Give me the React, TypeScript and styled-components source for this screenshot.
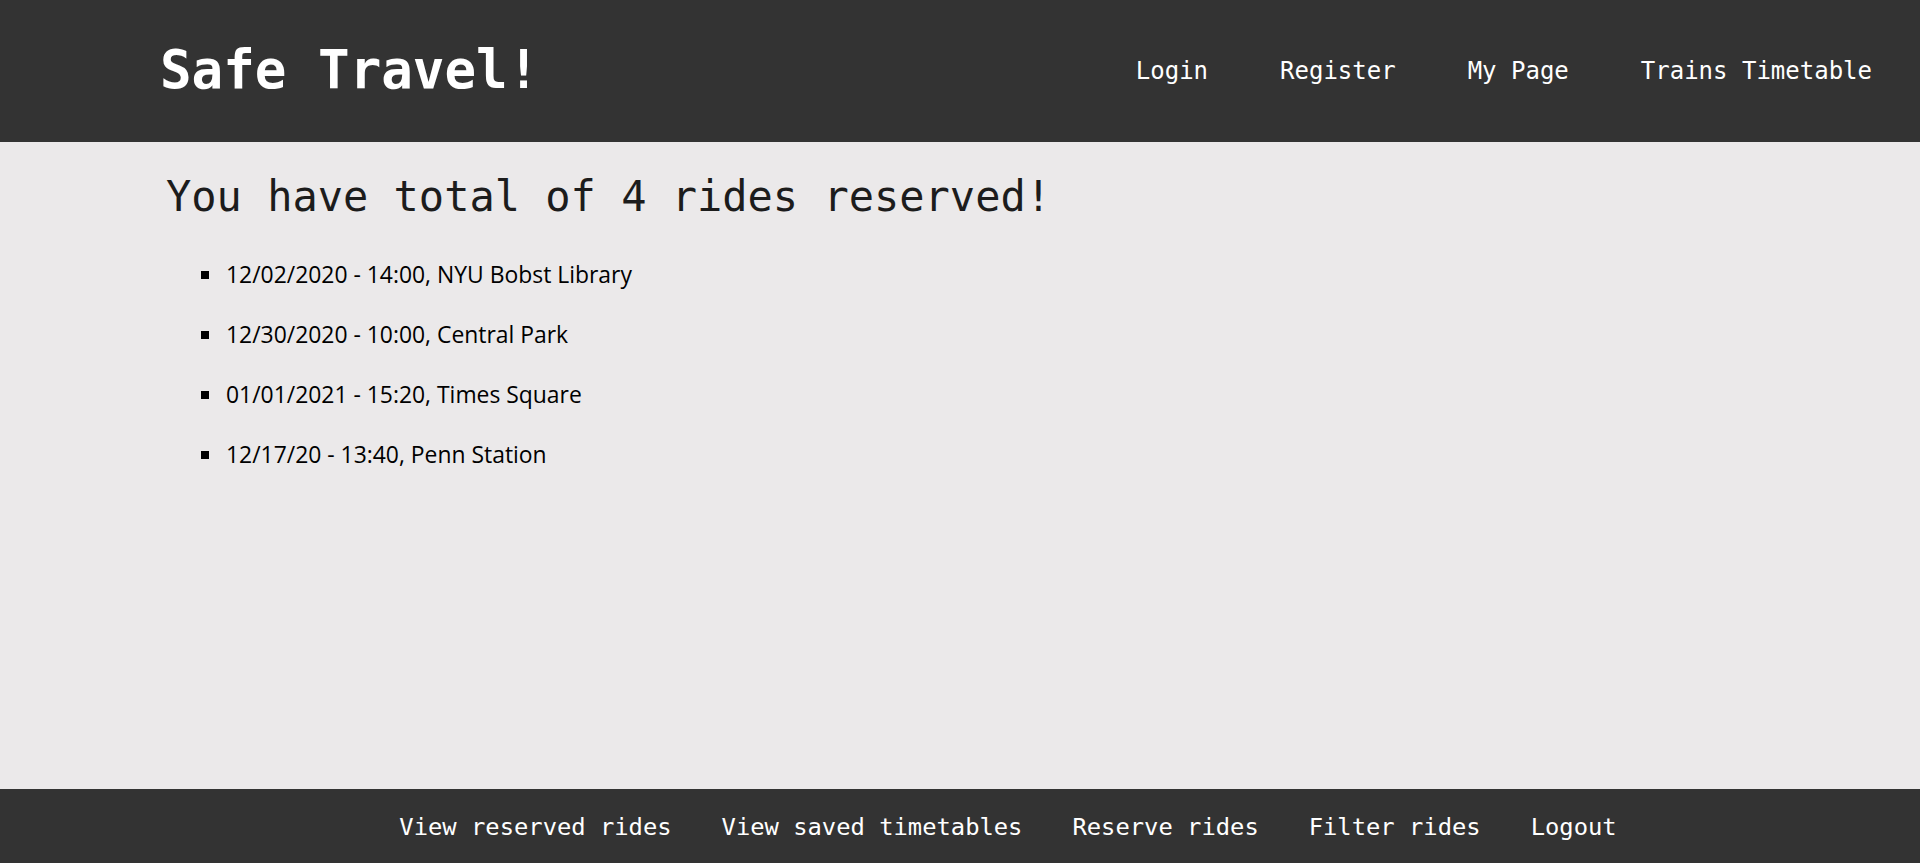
import React from "react";
import styled, { createGlobalStyle } from "styled-components";

const Global = createGlobalStyle`
  html, body { margin: 0; padding: 0; height: 100%; }
  body { background: #ebe9ea; font-family: "Open Sans", "Noto Sans", sans-serif; }
  #root { min-height: 100vh; display: flex; flex-direction: column; }
`;

const mono = `"DejaVu Sans Mono", "Liberation Mono", monospace`;

const Page = styled.div`
  min-height: 100vh;
  display: flex;
  flex-direction: column;
`;

const Header = styled.header`
  height: 142px;
  flex: none;
  background: #333333;
  display: flex;
  align-items: center;
  justify-content: space-between;
  padding: 0 48px 0 160px;
  box-sizing: border-box;
`;

const Title = styled.h1`
  margin: 0 0 4px 0;
  color: #ffffff;
  font-family: ${mono};
  font-weight: bold;
  font-size: 52.5px;
`;

const Nav = styled.nav`
  display: flex;
  gap: 72px;
`;

const NavLink = styled.a`
  color: #ffffff;
  text-decoration: none;
  font-family: ${mono};
  font-size: 24px;
`;

const Main = styled.main`
  flex: 1;
  padding: 30px 0 0 166px;
`;

const Heading = styled.h2`
  margin: 0;
  font-family: ${mono};
  font-weight: normal;
  font-size: 42px;
  color: #1c1c1c;
`;

const RideList = styled.ul`
  list-style: none;
  margin: 39px 0 0 0;
  padding: 0 0 0 35px;
  display: flex;
  flex-direction: column;
  gap: 30px;
`;

const Ride = styled.li`
  display: flex;
  align-items: center;
  gap: 17px;
  font-size: 22.9px;
  line-height: 30px;
  color: #000000;
`;

const Bullet = styled.span`
  width: 8px;
  height: 8px;
  background: #000000;
  flex: none;
`;

const Footer = styled.footer`
  height: 74px;
  flex: none;
  background: #333333;
  display: flex;
  align-items: center;
  justify-content: center;
  gap: 50px;
  padding: 2px 0 0 96px;
  box-sizing: border-box;
`;

const FooterLink = styled.a`
  color: #ffffff;
  text-decoration: none;
  font-family: ${mono};
  font-size: 23.8px;
`;

const rides = [
  "12/02/2020 - 14:00, NYU Bobst Library",
  "12/30/2020 - 10:00, Central Park",
  "01/01/2021 - 15:20, Times Square",
  "12/17/20 - 13:40, Penn Station",
];

const navItems = ["Login", "Register", "My Page", "Trains Timetable"];
const footerItems = [
  "View reserved rides",
  "View saved timetables",
  "Reserve rides",
  "Filter rides",
  "Logout",
];

export default function App() {
  return (
    <Page>
      <Global />
      <Header>
        <Title>Safe Travel!</Title>
        <Nav>
          {navItems.map((n) => (
            <NavLink key={n} href="#">
              {n}
            </NavLink>
          ))}
        </Nav>
      </Header>
      <Main>
        <Heading>You have total of 4 rides reserved!</Heading>
        <RideList>
          {rides.map((r) => (
            <Ride key={r}>
              <Bullet />
              {r}
            </Ride>
          ))}
        </RideList>
      </Main>
      <Footer>
        {footerItems.map((f) => (
          <FooterLink key={f} href="#">
            {f}
          </FooterLink>
        ))}
      </Footer>
    </Page>
  );
}
